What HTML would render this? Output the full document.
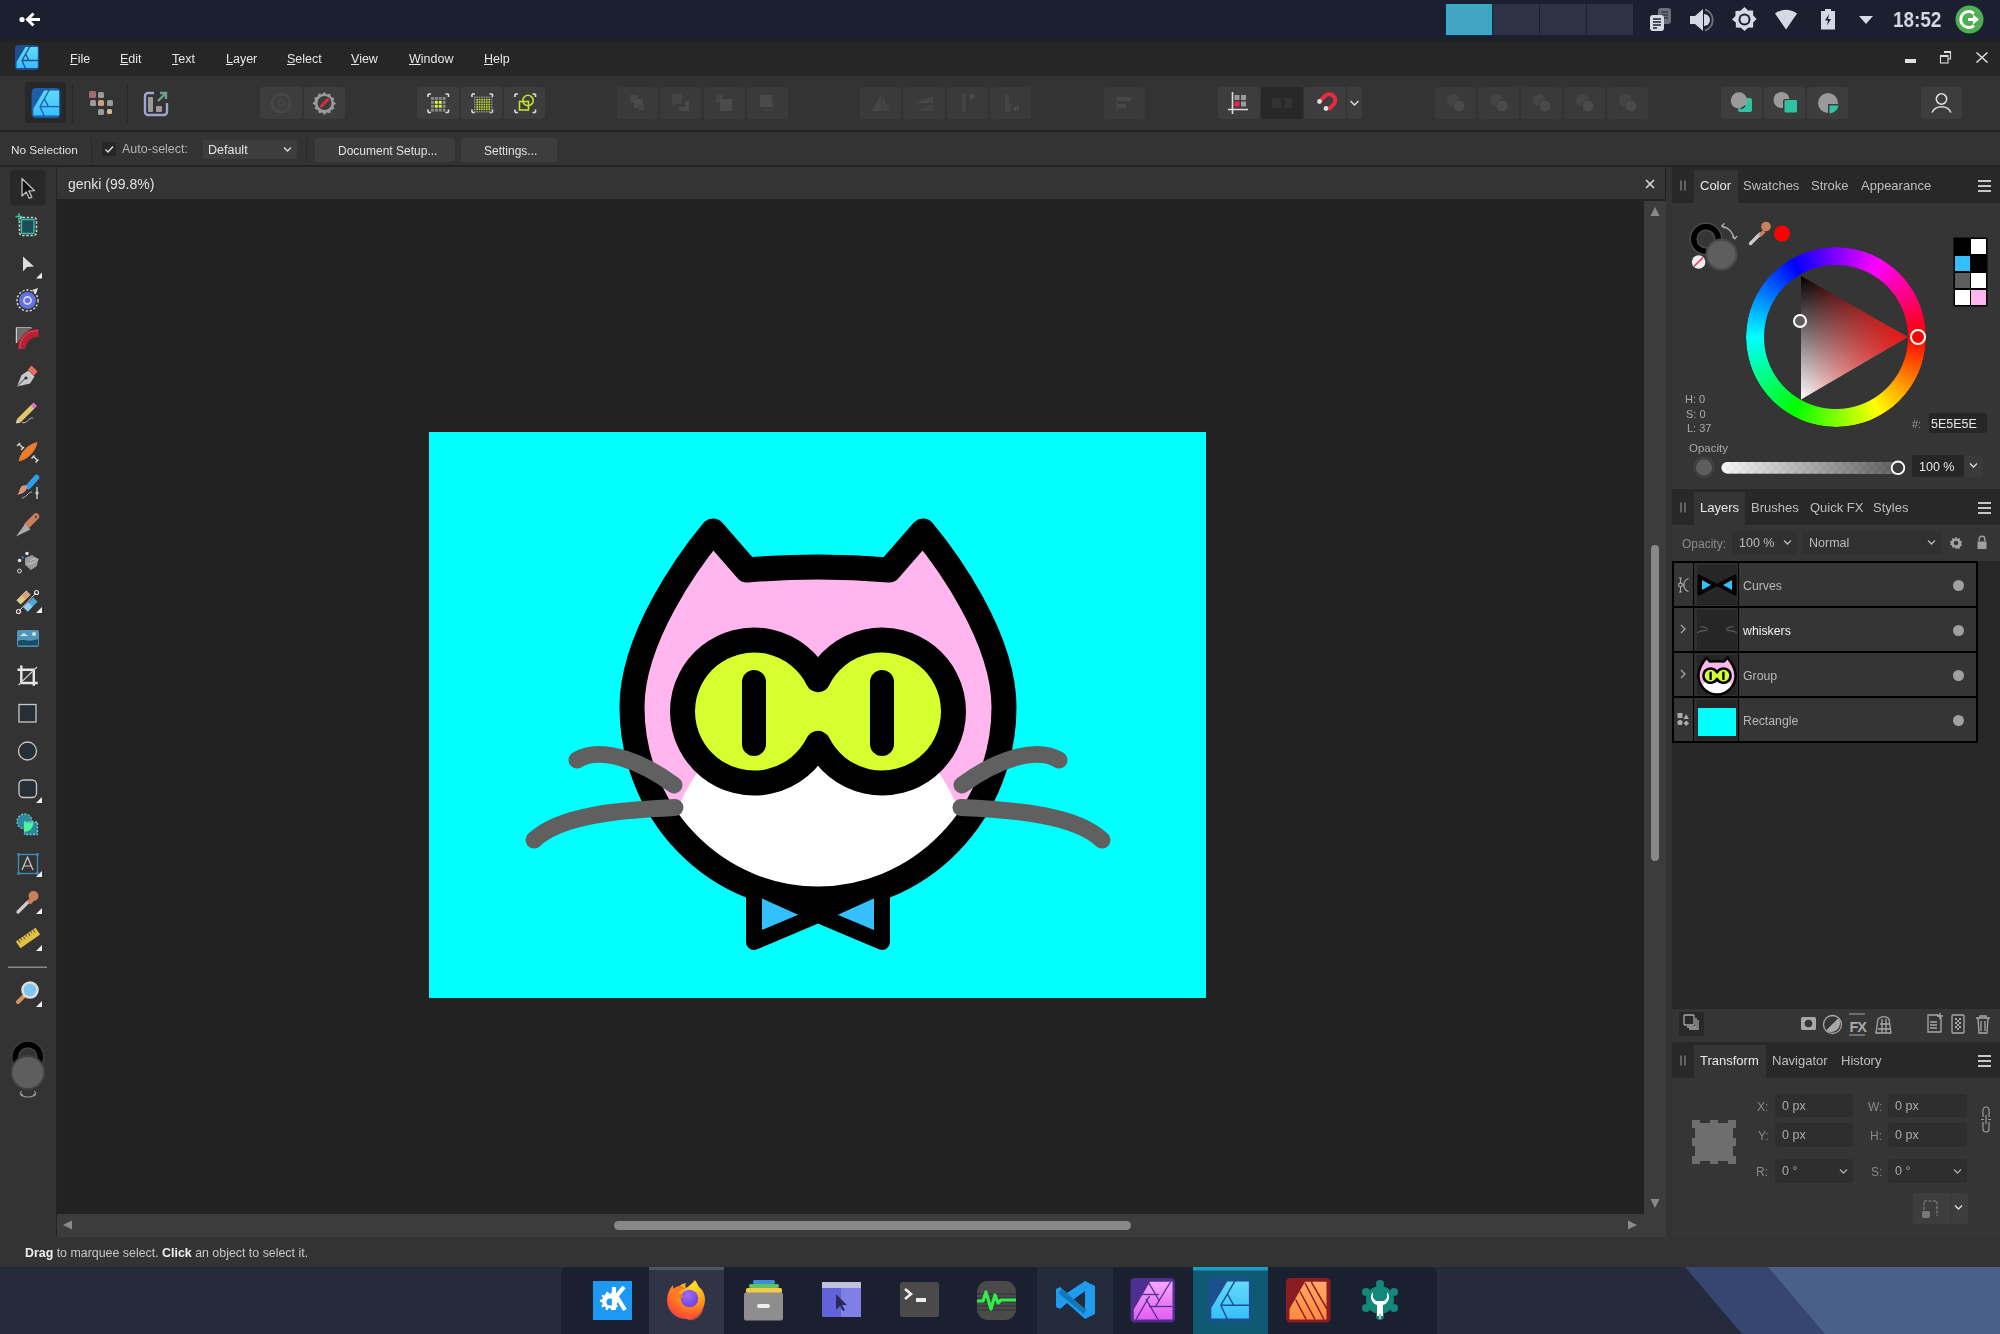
<!DOCTYPE html>
<html><head><meta charset="utf-8">
<style>
*{margin:0;padding:0;box-sizing:border-box}
html,body{width:2000px;height:1334px;overflow:hidden;background:#222;font-family:"Liberation Sans",sans-serif;color:#ddd;-webkit-font-smoothing:antialiased}
.t,.mi,.tab,.lbl,.val{will-change:transform}
.a{position:absolute}
#top{left:0;top:0;width:2000px;height:39px;background:#1b2031}
#menu{left:0;top:39px;width:2000px;height:37px;background:linear-gradient(#202020,#262626 5px)}
#tool{left:0;top:76px;width:2000px;height:54px;background:#333}
#ctx{left:0;top:131px;width:2000px;height:35px;background:#333;border-top:1px solid #222}
#sep2{left:0;top:165px;width:2000px;height:2px;background:#232323}
#ltools{left:0;top:167px;width:56px;height:1070px;background:#333}
#lsep{left:56px;top:167px;width:1px;height:1070px;background:#242424}
#doctab{left:57px;top:167px;width:1608px;height:32px;background:#353535}
#canvas{left:57px;top:200px;width:1587px;height:1014px;background:#222}
#vscroll{left:1644px;top:201px;width:22px;height:1036px;background:#3c3c3c}
#hscroll{left:57px;top:1214px;width:1609px;height:23px;background:#3c3c3c}
#rgap{left:1666px;top:167px;width:6px;height:1070px;background:#333}
#rpanel{left:1672px;top:167px;width:328px;height:1070px;background:#353535}
#status{left:0;top:1237px;width:2000px;height:30px;background:#333}
#task{left:0;top:1267px;width:2000px;height:67px;background:#252b3d;overflow:hidden}
.menuitem{font-size:13px;color:#e6e6e6;top:50px}

.t{position:absolute;white-space:nowrap;line-height:1}
.btn{position:absolute;background:#3b3b3b;border-radius:3px}
.sep{position:absolute;width:1px;background:#262626}
.mi{position:absolute;top:53px;font-size:12.5px;color:#e6e6e6;line-height:1}
.mi u{text-decoration:underline;text-underline-offset:0.5px}

.tabbar{position:absolute;left:1672px;width:328px;height:36px;background:#282828}
.grip{position:absolute;width:22px;height:36px}
.tab{position:absolute;font-size:13px;color:#c8c8c8;line-height:1;white-space:nowrap}
.tabact{position:absolute;background:#353535}
.ham{position:absolute;left:1978px;width:13px;height:12px}
.ham i{display:block;height:2px;background:#c8c8c8;margin-bottom:3px}
.lbl{position:absolute;font-size:11.5px;color:#9a9a9a;line-height:1;white-space:nowrap}
.inp{position:absolute;background:#2b2b2b;border-radius:3px}
.val{position:absolute;font-size:12.5px;color:#d0d0d0;line-height:1;white-space:nowrap}
</style></head><body>
<div id="top" class="a"></div>
<div id="menu" class="a"></div>
<div id="tool" class="a"></div>
<div id="ctx" class="a"></div>
<div id="sep2" class="a"></div>
<div id="ltools" class="a"></div>
<div id="lsep" class="a"></div>
<div id="doctab" class="a"></div>
<div id="canvas" class="a"></div>
<div id="vscroll" class="a"></div>
<div id="hscroll" class="a"></div>
<div id="rgap" class="a"></div>
<div id="rpanel" class="a"></div>
<div id="status" class="a"></div>
<div id="task" class="a"></div>

<!-- KDE top panel -->
<svg class="a" style="left:14px;top:9px" width="34" height="22" viewBox="0 0 34 22"><circle cx="8" cy="10.5" r="2.6" fill="#fff"/><path d="M26 10.5 H14 M19.5 4.5 L13.5 10.5 L19.5 16.5" stroke="#fff" stroke-width="3" fill="none" stroke-linecap="butt" stroke-linejoin="miter"/></svg>
<div class="a" style="left:1446px;top:4px;width:46px;height:31px;background:#41a5c1;border:1px solid #20b6dd"></div>
<div class="a" style="left:1493px;top:4px;width:46px;height:31px;background:#2d3244"></div>
<div class="a" style="left:1540px;top:4px;width:46px;height:31px;background:#2d3244"></div>
<div class="a" style="left:1587px;top:4px;width:46px;height:31px;background:#2d3244"></div>
<svg class="a" style="left:1648px;top:6px" width="28" height="28" viewBox="0 0 28 28">
<rect x="10" y="2" width="13" height="16" rx="3" fill="#6a6f7c"/><path d="M13 6h7M13 9h7M13 12h7" stroke="#1b2031" stroke-width="1.2"/>
<rect x="2" y="9" width="14" height="16" rx="3" fill="#d4d9e3"/><path d="M5 13h8M5 16h8M5 19h8M5 22h4" stroke="#1b2031" stroke-width="1.3"/></svg>
<svg class="a" style="left:1688px;top:7px" width="28" height="26" viewBox="0 0 28 26"><path d="M2 9h5l8-7v22l-8-7H2z" fill="#d4d9e3"/><path d="M16 7a6 6 0 0 1 0 12z" fill="#d4d9e3"/><path d="M17 2.5a11 11 0 0 1 0 21" stroke="#6a6f7c" stroke-width="2" fill="none"/></svg>
<svg class="a" style="left:1731px;top:6px" width="27" height="27" viewBox="0 0 27 27"><path d="M13.5 1l3.6 3.4 5 0 .1 5 3.4 3.6-3.4 3.6-.1 5-5 .1-3.6 3.4-3.6-3.4-5-.1-.1-5L1 13.5l3.4-3.6.1-5 5-.1z" fill="#d4d9e3"/><circle cx="13.5" cy="13.5" r="6" fill="#1b2031"/><circle cx="13.5" cy="13.5" r="4" fill="#d4d9e3"/></svg>
<svg class="a" style="left:1774px;top:9px" width="24" height="21" viewBox="0 0 24 21"><path d="M1 4.5Q12 -3 23 4.5L12 20.5z" fill="#d4d9e3"/></svg>
<svg class="a" style="left:1820px;top:8px" width="16" height="22" viewBox="0 0 16 22"><rect x="5" y="1" width="6" height="3" fill="#d4d9e3"/><rect x="1" y="3" width="14" height="18.5" fill="#d4d9e3"/><path d="M9 6L5 12.5h3l-1 5 4-6.5H8z" fill="#1b2031"/></svg>
<svg class="a" style="left:1858px;top:15px" width="16" height="10" viewBox="0 0 16 10"><path d="M1 1h14L8 9z" fill="#d4d9e3"/></svg>
<div class="t" style="left:1893px;top:9px;font-size:22.5px;font-weight:700;color:#d5dae5;transform:scaleX(0.84);transform-origin:0 0">18:52</div>
<svg class="a" style="left:1955px;top:5px" width="29" height="29" viewBox="0 0 29 29"><circle cx="14.5" cy="14.5" r="14" fill="#4caf50"/><path d="M19 8.5A8 8 0 1 0 19 20.5" stroke="#fff" stroke-width="3" fill="none"/><path d="M13 14.5h7" stroke="#fff" stroke-width="3"/><path d="M18 9.5l6 5-6 5z" fill="#fff"/></svg>
<!-- menu -->
<svg class="a" style="left:15px;top:45px" width="24" height="25" viewBox="0 0 24 25"><defs><linearGradient id="lg1" x1="0" y1="0" x2="0" y2="1"><stop offset="0" stop-color="#62daf8"/><stop offset="1" stop-color="#38c0fc"/></linearGradient></defs><rect x="0" y="0" width="24" height="25" rx="3.5" fill="#1b4f8f"/><path d="M10.5 2H22.8V23H1.5V17z" fill="url(#lg1)"/><path d="M14.8 1.5L7 15.5L10.8 24M7 15.5H23M10.5 8.8L14 15.5" stroke="#1b4f8f" stroke-width="1.3" fill="none"/></svg>
<div class="mi" style="left:70px"><u>F</u>ile</div>
<div class="mi" style="left:120px"><u>E</u>dit</div>
<div class="mi" style="left:172px"><u>T</u>ext</div>
<div class="mi" style="left:226px"><u>L</u>ayer</div>
<div class="mi" style="left:287px"><u>S</u>elect</div>
<div class="mi" style="left:351px"><u>V</u>iew</div>
<div class="mi" style="left:409px"><u>W</u>indow</div>
<div class="mi" style="left:484px"><u>H</u>elp</div>
<div class="a" style="left:1905px;top:58.5px;width:11px;height:4px;background:#e0e0e0"></div>
<svg class="a" style="left:1938px;top:50px" width="14" height="14" viewBox="0 0 14 14"><path d="M6 1.5h6.5v7.5H10" stroke="#ddd" stroke-width="1.1" fill="none"/><path d="M6 2h6.5" stroke="#ddd" stroke-width="2"/><rect x="2.5" y="5.5" width="7.5" height="7.5" fill="#262626" stroke="#ddd" stroke-width="1.1"/><path d="M2.5 6h7.5" stroke="#ddd" stroke-width="2"/></svg>
<svg class="a" style="left:1975px;top:51px" width="14" height="13" viewBox="0 0 14 13"><path d="M1.5 1.5L12.5 11.5M12.5 1.5L1.5 11.5" stroke="#ddd" stroke-width="1.6"/></svg>
<!-- toolbar -->
<div class="a" style="left:25px;top:82px;width:41px;height:41px;background:#282828;border-radius:3px"></div>
<svg class="a" style="left:31px;top:88px" width="30" height="30" viewBox="0 0 24 25"><rect x="0" y="0" width="24" height="25" rx="3.5" fill="#1b5fa8"/><path d="M10.5 2H22.8V23H1.5V17z" fill="url(#lg1)"/><path d="M14.8 1.5L7 15.5L10.8 24M7 15.5H23M10.5 8.8L14 15.5" stroke="#1b5fa8" stroke-width="1.1" fill="none"/></svg>
<div class="sep" style="left:72px;top:83px;height:40px;background:#262626"></div>
<div class="sep" style="left:127px;top:83px;height:40px;background:#262626"></div>
<svg class="a" style="left:88px;top:90px" width="26" height="26" viewBox="0 0 26 26">
<rect x="1" y="1" width="7" height="7" rx="1.5" fill="#a06a74"/><rect x="10" y="2" width="6" height="6" rx="1.5" fill="#9a9a9a"/>
<rect x="2" y="10" width="6" height="6" rx="1.5" fill="#9a9a9a"/><rect x="10" y="10" width="6" height="6" rx="1.5" fill="#c4a27e"/><rect x="19" y="10" width="6" height="6" rx="1.5" fill="#9a9a9a"/>
<rect x="10" y="19" width="6" height="6" rx="1.5" fill="#9a9a9a"/><rect x="19" y="19" width="5" height="5" rx="1.5" fill="#cbbd8c"/></svg>
<svg class="a" style="left:142px;top:89px" width="28" height="28" viewBox="0 0 28 28">
<path d="M12 4H6a3 3 0 0 0-3 3v16a3 3 0 0 0 3 3h16a3 3 0 0 0 3-3v-9" stroke="#9fa3d0" stroke-width="2.4" fill="none"/>
<rect x="6" y="8" width="5" height="15" rx="1" fill="#9a9a9a"/><rect x="14" y="17" width="6" height="6" rx="1" fill="#9a9a9a"/>
<path d="M16 12L24 4M18 4h6v6" stroke="#6aa08f" stroke-width="2.4" fill="none"/></svg>
<div class="btn" style="left:260px;top:87px;width:42px;height:32px;background:#3d3d3d"><svg width="42" height="32" viewBox="0 0 42 32"><circle cx="21" cy="16" r="9" fill="none" stroke="#474747" stroke-width="3"/><circle cx="21" cy="16" r="3" fill="none" stroke="#474747" stroke-width="2"/></svg></div>
<div class="btn" style="left:304px;top:87px;width:41px;height:32px;background:#3d3d3d"><svg width="41" height="32" viewBox="0 0 41 32"><path d="M20.5 5l2.2 2.6 3.3-.9 1 3.3 3.3 1-.9 3.3 2.6 2.2-2.6 2.2.9 3.3-3.3 1-1 3.3-3.3-.9-2.2 2.6-2.2-2.6-3.3.9-1-3.3-3.3-1 .9-3.3L8.4 16.2 11 14l-.9-3.3 3.3-1 1-3.3 3.3.9z" fill="#9a9a9a"/><circle cx="20.5" cy="16" r="7" fill="#3d3d3d"/><path d="M16.5 20l8-8" stroke="#e8293f" stroke-width="2.6"/></svg></div>
<div class="btn" style="left:417px;top:87px;width:42px;height:32px;background:#3d3d3d"><svg width="42" height="32" viewBox="0 0 42 32"><path d="M11 7v3M11 7h3M31.5 7v3M31.5 7h-3M11 25.5v-3M11 25.5h3M31.5 25.5v-3M31.5 25.5h-3" stroke="#ddd" stroke-width="1.6"/><rect x="14.0" y="10.0" width="2.9" height="2.9" fill="#8a8a8a"/><rect x="14.0" y="13.9" width="2.9" height="2.9" fill="#8a8a8a"/><rect x="14.0" y="17.8" width="2.9" height="2.9" fill="#8a8a8a"/><rect x="14.0" y="21.7" width="2.9" height="2.9" fill="#8a8a8a"/><rect x="17.9" y="10.0" width="2.9" height="2.9" fill="#8a8a8a"/><rect x="17.9" y="13.9" width="2.9" height="2.9" fill="#e3fb2a"/><rect x="17.9" y="17.8" width="2.9" height="2.9" fill="#e3fb2a"/><rect x="17.9" y="21.7" width="2.9" height="2.9" fill="#8a8a8a"/><rect x="21.8" y="10.0" width="2.9" height="2.9" fill="#8a8a8a"/><rect x="21.8" y="13.9" width="2.9" height="2.9" fill="#e3fb2a"/><rect x="21.8" y="17.8" width="2.9" height="2.9" fill="#e3fb2a"/><rect x="21.8" y="21.7" width="2.9" height="2.9" fill="#8a8a8a"/><rect x="25.7" y="10.0" width="2.9" height="2.9" fill="#8a8a8a"/><rect x="25.7" y="13.9" width="2.9" height="2.9" fill="#8a8a8a"/><rect x="25.7" y="17.8" width="2.9" height="2.9" fill="#8a8a8a"/><rect x="25.7" y="21.7" width="2.9" height="2.9" fill="#8a8a8a"/></svg></div>
<div class="btn" style="left:461px;top:87px;width:41px;height:32px;background:#3d3d3d"><svg width="42" height="32" viewBox="0 0 42 32"><path d="M11 7v3M11 7h3M31.5 7v3M31.5 7h-3M11 25.5v-3M11 25.5h3M31.5 25.5v-3M31.5 25.5h-3" stroke="#ddd" stroke-width="1.6"/><rect x="13.0" y="9.5" width="1.6" height="1.6" fill="#888"/><rect x="13.0" y="11.9" width="1.6" height="1.6" fill="#888"/><rect x="13.0" y="14.3" width="1.6" height="1.6" fill="#888"/><rect x="13.0" y="16.7" width="1.6" height="1.6" fill="#888"/><rect x="13.0" y="19.1" width="1.6" height="1.6" fill="#888"/><rect x="13.0" y="21.5" width="1.6" height="1.6" fill="#888"/><rect x="13.0" y="23.9" width="1.6" height="1.6" fill="#888"/><rect x="15.4" y="9.5" width="1.6" height="1.6" fill="#888"/><rect x="15.4" y="11.9" width="1.6" height="1.6" fill="#c8e02a"/><rect x="15.4" y="14.3" width="1.6" height="1.6" fill="#c8e02a"/><rect x="15.4" y="16.7" width="1.6" height="1.6" fill="#c8e02a"/><rect x="15.4" y="19.1" width="1.6" height="1.6" fill="#c8e02a"/><rect x="15.4" y="21.5" width="1.6" height="1.6" fill="#c8e02a"/><rect x="15.4" y="23.9" width="1.6" height="1.6" fill="#888"/><rect x="17.8" y="9.5" width="1.6" height="1.6" fill="#888"/><rect x="17.8" y="11.9" width="1.6" height="1.6" fill="#c8e02a"/><rect x="17.8" y="14.3" width="1.6" height="1.6" fill="#c8e02a"/><rect x="17.8" y="16.7" width="1.6" height="1.6" fill="#c8e02a"/><rect x="17.8" y="19.1" width="1.6" height="1.6" fill="#c8e02a"/><rect x="17.8" y="21.5" width="1.6" height="1.6" fill="#c8e02a"/><rect x="17.8" y="23.9" width="1.6" height="1.6" fill="#888"/><rect x="20.2" y="9.5" width="1.6" height="1.6" fill="#888"/><rect x="20.2" y="11.9" width="1.6" height="1.6" fill="#c8e02a"/><rect x="20.2" y="14.3" width="1.6" height="1.6" fill="#c8e02a"/><rect x="20.2" y="16.7" width="1.6" height="1.6" fill="#c8e02a"/><rect x="20.2" y="19.1" width="1.6" height="1.6" fill="#c8e02a"/><rect x="20.2" y="21.5" width="1.6" height="1.6" fill="#c8e02a"/><rect x="20.2" y="23.9" width="1.6" height="1.6" fill="#888"/><rect x="22.6" y="9.5" width="1.6" height="1.6" fill="#888"/><rect x="22.6" y="11.9" width="1.6" height="1.6" fill="#c8e02a"/><rect x="22.6" y="14.3" width="1.6" height="1.6" fill="#c8e02a"/><rect x="22.6" y="16.7" width="1.6" height="1.6" fill="#c8e02a"/><rect x="22.6" y="19.1" width="1.6" height="1.6" fill="#c8e02a"/><rect x="22.6" y="21.5" width="1.6" height="1.6" fill="#c8e02a"/><rect x="22.6" y="23.9" width="1.6" height="1.6" fill="#888"/><rect x="25.0" y="9.5" width="1.6" height="1.6" fill="#888"/><rect x="25.0" y="11.9" width="1.6" height="1.6" fill="#c8e02a"/><rect x="25.0" y="14.3" width="1.6" height="1.6" fill="#c8e02a"/><rect x="25.0" y="16.7" width="1.6" height="1.6" fill="#c8e02a"/><rect x="25.0" y="19.1" width="1.6" height="1.6" fill="#c8e02a"/><rect x="25.0" y="21.5" width="1.6" height="1.6" fill="#c8e02a"/><rect x="25.0" y="23.9" width="1.6" height="1.6" fill="#888"/><rect x="27.4" y="9.5" width="1.6" height="1.6" fill="#888"/><rect x="27.4" y="11.9" width="1.6" height="1.6" fill="#c8e02a"/><rect x="27.4" y="14.3" width="1.6" height="1.6" fill="#c8e02a"/><rect x="27.4" y="16.7" width="1.6" height="1.6" fill="#c8e02a"/><rect x="27.4" y="19.1" width="1.6" height="1.6" fill="#c8e02a"/><rect x="27.4" y="21.5" width="1.6" height="1.6" fill="#c8e02a"/><rect x="27.4" y="23.9" width="1.6" height="1.6" fill="#888"/><rect x="29.8" y="9.5" width="1.6" height="1.6" fill="#888"/><rect x="29.8" y="11.9" width="1.6" height="1.6" fill="#888"/><rect x="29.8" y="14.3" width="1.6" height="1.6" fill="#888"/><rect x="29.8" y="16.7" width="1.6" height="1.6" fill="#888"/><rect x="29.8" y="19.1" width="1.6" height="1.6" fill="#888"/><rect x="29.8" y="21.5" width="1.6" height="1.6" fill="#888"/><rect x="29.8" y="23.9" width="1.6" height="1.6" fill="#888"/></svg></div>
<div class="btn" style="left:504px;top:87px;width:41px;height:32px;background:#3d3d3d"><svg width="42" height="32" viewBox="0 0 42 32"><path d="M11 7v3M11 7h3M31.5 7v3M31.5 7h-3M11 25.5v-3M11 25.5h3M31.5 25.5v-3M31.5 25.5h-3" stroke="#ddd" stroke-width="1.6"/><rect x="15.5" y="14.5" width="9" height="8.5" fill="none" stroke="#c8e02a" stroke-width="1.6"/><circle cx="24" cy="13.5" r="5.2" fill="none" stroke="#c8e02a" stroke-width="1.6"/></svg></div>
<div class="btn" style="left:617px;top:87px;width:41px;height:32px;background:#3a3a3a"><svg width="42" height="32" viewBox="0 0 42 32"><rect x="13" y="8" width="8" height="8" fill="#464646"/><rect x="17" y="12" width="9" height="9" fill="#4a4a4a"/><rect x="21" y="18" width="6" height="5" fill="#444"/></svg></div>
<div class="btn" style="left:660px;top:87px;width:41px;height:32px;background:#3a3a3a"><svg width="42" height="32" viewBox="0 0 42 32"><rect x="12" y="7" width="10" height="10" fill="#444"/><path d="M19 20h6v-6h4v10H19z" fill="#4a4a4a"/></svg></div>
<div class="btn" style="left:704px;top:87px;width:41px;height:32px;background:#3a3a3a"><svg width="42" height="32" viewBox="0 0 42 32"><rect x="12" y="7" width="7" height="9" fill="#444"/><rect x="16" y="12" width="12" height="12" fill="#4a4a4a"/></svg></div>
<div class="btn" style="left:747px;top:87px;width:41px;height:32px;background:#3a3a3a"><svg width="42" height="32" viewBox="0 0 42 32"><rect x="13" y="8" width="12" height="12" fill="#4a4a4a"/><path d="M26 15v8h-8" stroke="#444" stroke-width="1.5" fill="none"/></svg></div>
<div class="btn" style="left:860px;top:87px;width:41px;height:32px;background:#3a3a3a"><svg width="42" height="32" viewBox="0 0 42 32"><path d="M21 7v17h-9z" fill="#464646"/><path d="M22 7v17h8z" fill="#424242"/></svg></div>
<div class="btn" style="left:903px;top:87px;width:42px;height:32px;background:#3a3a3a"><svg width="42" height="32" viewBox="0 0 42 32"><path d="M30 9v7H13z" fill="#464646"/><path d="M30 17v7H13z" fill="#424242"/></svg></div>
<div class="btn" style="left:947px;top:87px;width:41px;height:32px;background:#3a3a3a"><svg width="42" height="32" viewBox="0 0 42 32"><rect x="15" y="7" width="6" height="18" fill="#444"/><path d="M20 8v17" stroke="#2c2c2c" stroke-width="1"/><path d="M24 13v-4h4M26 7l-2 2 2 2" stroke="#4e4e4e" stroke-width="1.3" fill="none"/></svg></div>
<div class="btn" style="left:990px;top:87px;width:41px;height:32px;background:#3a3a3a"><svg width="42" height="32" viewBox="0 0 42 32"><rect x="15" y="7" width="6" height="18" fill="#444"/><path d="M20 7v9" stroke="#2c2c2c" stroke-width="1"/><path d="M28 18v4h-4M26 24l-2-2 2-2" stroke="#4e4e4e" stroke-width="1.3" fill="none"/></svg></div>
<div class="btn" style="left:1104px;top:87px;width:41px;height:32px;background:#3a3a3a"><svg width="42" height="32" viewBox="0 0 42 32"><rect x="13" y="10" width="14" height="4" fill="#484848"/><rect x="13" y="17" width="9" height="4" fill="#484848"/><path d="M13 8v16" stroke="#444" stroke-width="1.3"/></svg></div>
<div class="btn" style="left:1218px;top:87px;width:42px;height:32px;background:#3d3d3d"><svg width="42" height="32" viewBox="0 0 42 32"><path d="M14.5 5v22M10 22.5h20" stroke="#ddd" stroke-width="1.6"/><rect x="16.5" y="8" width="5" height="5" fill="#9a9a9a"/><rect x="23" y="8" width="5" height="5" fill="#9a9a9a"/><rect x="16.5" y="14.5" width="5" height="5" fill="#e8293f"/><rect x="23" y="14.5" width="5" height="5" fill="#9a9a9a"/></svg></div>
<div class="btn" style="left:1261px;top:87px;width:42px;height:32px;background:#282828"><svg width="42" height="32" viewBox="0 0 42 32"><rect x="11" y="11" width="9" height="10" fill="#333"/><path d="M22 11h9v10h-9l3-5z" fill="#333"/></svg></div>
<div class="btn" style="left:1304px;top:87px;width:42px;height:32px;background:#3d3d3d"><svg width="42" height="32" viewBox="0 0 42 32"><path d="M16 14l5-5a6 6 0 0 1 8.5 8.5l-5 5" stroke="#e8293f" stroke-width="4" fill="none"/><circle cx="15.5" cy="14.5" r="2.4" fill="#ddd"/><circle cx="22" cy="21.5" r="2.4" fill="#ddd"/></svg></div>
<div class="btn" style="left:1347px;top:87px;width:15px;height:32px;background:#3d3d3d"><svg width="15" height="32" viewBox="0 0 15 32"><path d="M3.5 14l4 4 4-4" stroke="#ddd" stroke-width="1.4" fill="none"/></svg></div>
<div class="btn" style="left:1435px;top:87px;width:41px;height:32px;background:#3a3a3a"><svg width="42" height="32" viewBox="0 0 42 32"><circle cx="18.5" cy="13.5" r="6.5" fill="#454545"/><circle cx="24" cy="19" r="6" fill="#4a4a4a" stroke="#3a3a3a" stroke-width="1"/></svg></div>
<div class="btn" style="left:1478px;top:87px;width:41px;height:32px;background:#3a3a3a"><svg width="42" height="32" viewBox="0 0 42 32"><circle cx="18.5" cy="13.5" r="6.5" fill="#454545"/><circle cx="24" cy="19" r="6" fill="#4a4a4a" stroke="#3a3a3a" stroke-width="1"/></svg></div>
<div class="btn" style="left:1521px;top:87px;width:41px;height:32px;background:#3a3a3a"><svg width="42" height="32" viewBox="0 0 42 32"><circle cx="18.5" cy="13.5" r="6.5" fill="#454545"/><circle cx="24" cy="19" r="6" fill="#4a4a4a" stroke="#3a3a3a" stroke-width="1"/></svg></div>
<div class="btn" style="left:1564px;top:87px;width:41px;height:32px;background:#3a3a3a"><svg width="42" height="32" viewBox="0 0 42 32"><circle cx="18.5" cy="13.5" r="6.5" fill="#454545"/><circle cx="24" cy="19" r="6" fill="#4a4a4a" stroke="#3a3a3a" stroke-width="1"/></svg></div>
<div class="btn" style="left:1607px;top:87px;width:41px;height:32px;background:#3a3a3a"><svg width="42" height="32" viewBox="0 0 42 32"><circle cx="18.5" cy="13.5" r="6.5" fill="#454545"/><circle cx="24" cy="19" r="6" fill="#4a4a4a" stroke="#3a3a3a" stroke-width="1"/></svg></div>
<div class="btn" style="left:1721px;top:87px;width:41px;height:32px;background:#3d3d3d"><svg width="41" height="32" viewBox="0 0 41 32"><path d="M24 11h5a2 2 0 0 1 2 2v10a2 2 0 0 1-2 2H19a2 2 0 0 1-2-2" fill="#2ec4a0"/><circle cx="18" cy="13.5" r="8.2" fill="#9a9a9a"/><path d="M25 18a8 8 0 0 1-6.5 4" stroke="#3d3d3d" stroke-width="0"/></svg></div>
<div class="btn" style="left:1764px;top:87px;width:41px;height:32px;background:#3d3d3d"><svg width="41" height="32" viewBox="0 0 41 32"><circle cx="17.5" cy="13" r="8" fill="#9a9a9a"/><rect x="19" y="12" width="13.5" height="13.5" rx="2" fill="#3d3d3d"/><rect x="20.5" y="13" width="12.5" height="12.5" rx="1.5" fill="#2ec4a0"/></svg></div>
<div class="btn" style="left:1807px;top:87px;width:41px;height:32px;background:#3d3d3d"><svg width="41" height="32" viewBox="0 0 41 32"><circle cx="21" cy="16" r="10" fill="#9a9a9a"/><path d="M21 17h11a11 11 0 0 1 -11 10z" fill="#3d3d3d"/><path d="M22.5 18.5h9a9.5 9.5 0 0 1-9 8z" fill="#2ec4a0"/></svg></div>
<div class="btn" style="left:1921px;top:87px;width:41px;height:32px;background:#3d3d3d"><svg width="41" height="32" viewBox="0 0 41 32"><circle cx="20.5" cy="12" r="5.2" fill="none" stroke="#ddd" stroke-width="1.6"/><path d="M11 25.5a10.5 10 0 0 1 19 0" fill="none" stroke="#ddd" stroke-width="1.6"/></svg></div>
<!-- left tools -->
<svg class="a" style="left:0;top:0" width="56" height="1110" viewBox="0 0 56 1110"><rect x="10" y="170" width="35.5" height="35.5" rx="4" fill="#282828"/><path d="M22 178.5v17.5l4.2-4 3 6.3 2.6-1.2-3-6.2 5.8-.2z" fill="#111" stroke="#bdbdbd" stroke-width="1.3" stroke-linejoin="round"/><rect x="19.5" y="217.5" width="17" height="18" rx="3" fill="none" stroke="#ccc" stroke-width="1.6" stroke-dasharray="2.5 1.6"/><rect x="21.5" y="219.5" width="12.5" height="14" rx="1" fill="#1f4a5a" stroke="#2ec4a0" stroke-width="1.4"/><path d="M19 213v7M15.5 216.5h7" stroke="#2ec4a0" stroke-width="1.5"/><path d="M23 256.5v15l4-4.5 7-.5z" fill="#ddd"/><path d="M36 278.5h6v-6z" fill="#eee"/><circle cx="27.5" cy="300.5" r="10.5" fill="none" stroke="#ddd" stroke-width="1.4" stroke-dasharray="2.2 1.8"/><circle cx="27.5" cy="300.5" r="8.5" fill="#6471e0"/><circle cx="27.5" cy="300.5" r="3.6" fill="none" stroke="#ddd" stroke-width="1.6"/><path d="M32 290l6-2-2 6z" fill="#ddd"/><path d="M16.5 343v-15h15" stroke="#ccc" stroke-width="1.4" fill="none"/><path d="M17 343v-15h14z" fill="#6a6a6a"/><path d="M18 349A19 19 0 0 1 38.5 329v8A12 12 0 0 0 25.5 349z" fill="#b52035"/><path d="M20 348.5A16.5 16.5 0 0 1 38 331" stroke="#ef5560" stroke-width="0.8" fill="none"/><path d="M31.5 365.5l6 6-3.5 4-6-6z" fill="#f26a5b"/><path d="M17 386.5l4.5-11.5 7-4.5 6 6-4.5 7z" fill="#c8c8c8"/><path d="M17 386.5l6-2.5 6-6" stroke="#7a7a7a" stroke-width="0" fill="none"/><path d="M17.5 386l8-8" stroke="#3a3a3a" stroke-width="1"/><circle cx="26" cy="378" r="1.6" fill="#333"/><path d="M33.5 402.5l3.5 3.5-2.5 2.5-3.5-3.5z" fill="#e571d8"/><path d="M31 405l3.5 3.5-14 14-3.5-3.5z" fill="#e3c56b"/><path d="M17 419l3.5 3.5-4.5 1z" fill="#f1e0a8"/><path d="M22 422.5c3 1 5-1 7-3s4-2 4-1" stroke="#bbb" stroke-width="1" fill="none"/><path d="M18.5 461.5C20 452 28 444 37.5 442C36 451.5 28 459.5 18.5 461.5Z" fill="#eb7d2e"/><g stroke="#ddd" stroke-width="1.3"><path d="M18.5 443.5l4 4M17 446l3-3M21 450l3-3"/><path d="M33 456l4 4M31.5 458.5l3-3M35.5 462.5l3-3"/></g><path d="M28.5 486.5L36.5 477.5" stroke="#2e9ee6" stroke-width="5.5" stroke-linecap="round"/><path d="M18 494.5c2 0 5-1 7-3s3-5 1-6-5 0-6 3-1 5-3 6z" fill="#d69478"/><path d="M22 498c4 0 6-6 10-6" stroke="#bbb" stroke-width="1" fill="none"/><path d="M37 487v12" stroke="#ccc" stroke-width="1.4"/><circle cx="37" cy="493" r="1.7" fill="#ccc"/><path d="M27.5 525L36 516.5" stroke="#c87f5c" stroke-width="6.5" stroke-linecap="round"/><circle cx="35.8" cy="516.8" r="1.1" fill="#333"/><path d="M16 536.5l9-12.5 5.5 5.5z" fill="#aaa"/><path d="M25 558l7-3 6 4-1 7-6 4-6-5z" fill="#9a9a9a"/><path d="M30 561c4-3 9-3 8-1s-8 4-11 4" stroke="#ccc" stroke-width="1" fill="none"/><path d="M20 561l4-5" stroke="#2e9ee6" stroke-width="1.6" stroke-dasharray="2 1.5"/><circle cx="19.5" cy="560.5" r="1.8" fill="#ddd"/><circle cx="27" cy="553.5" r="1.8" fill="#ddd"/><circle cx="19.5" cy="571" r="1.9" fill="none" stroke="#ddd" stroke-width="1"/><g transform="rotate(-45 27 601)"><rect x="20" y="593" width="14" height="6" fill="#e0c88a"/><rect x="20" y="603" width="14" height="6" fill="#4fa8d8"/><rect x="27" y="593" width="7" height="6" fill="#d9a07a"/><rect x="20" y="603" width="7" height="6" fill="#8fd0f0"/></g><path d="M19 611l17-18" stroke="#ddd" stroke-width="1"/><circle cx="18.5" cy="611.5" r="2" fill="none" stroke="#ddd" stroke-width="1.2"/><circle cx="36.5" cy="592.5" r="2" fill="none" stroke="#ddd" stroke-width="1.2"/><path d="M36 613h6v-6z" fill="#eee"/><rect x="17" y="630" width="22" height="17" rx="2" fill="#4f96b8"/><path d="M18 641c5-3 10 2 20-2v6.5H18z" fill="#1d4b60"/><path d="M20 636l4-3 4 3z" fill="#ddd"/><circle cx="34" cy="634" r="2" fill="#ddd"/><path d="M21.3 665.5v17.5h16.5M17.5 669.8h16.3v16" stroke="#e6e6e6" stroke-width="2.4" fill="none"/><path d="M18.5 685L37 667" stroke="#ccc" stroke-width="1.1"/><rect x="19" y="704.5" width="17" height="17.5" fill="#263034" stroke="#c8c8c8" stroke-width="1.3"/><circle cx="27.5" cy="751" r="9" fill="#263034" stroke="#c8c8c8" stroke-width="1.3"/><rect x="19" y="780" width="17.5" height="17.5" rx="4.5" fill="#263034" stroke="#c8c8c8" stroke-width="1.3"/><path d="M36 803h6v-6z" fill="#eee"/><circle cx="24.5" cy="821.5" r="7.5" fill="#2a8a9a" stroke="#6bc8e0" stroke-width="1.3" stroke-dasharray="2 1.5"/><rect x="24.5" y="822" width="13" height="12.5" fill="#2a8a9a" stroke="#6bc8e0" stroke-width="1.3" stroke-dasharray="2 1.5"/><path d="M24 822.5h9.5a9.5 9.5 0 0 1-9.5 9.5z" fill="#4ef59a"/><rect x="18.5" y="854.5" width="19" height="19" fill="none" stroke="#3a8fc4" stroke-width="1.3"/><circle cx="18.5" cy="854.5" r="1.4" fill="#3a8fc4"/><circle cx="37.5" cy="854.5" r="1.4" fill="#3a8fc4"/><circle cx="18.5" cy="873.5" r="1.4" fill="#3a8fc4"/><circle cx="37.5" cy="873.5" r="1.4" fill="#3a8fc4"/><path d="M22 870l5.5-13 5.5 13M24 866h7" stroke="#ccc" stroke-width="1.2" fill="none"/><path d="M36 877h6v-6z" fill="#eee"/><path d="M18 912l10-10" stroke="#ccc" stroke-width="3.2" stroke-linecap="round"/><circle cx="33.5" cy="896" r="5" fill="#c9805d"/><path d="M27 901l3.5 3.5 4-4-3.5-3.5z" fill="#c9805d"/><path d="M36 914h6v-6z" fill="#eee"/><g transform="rotate(-35 28 938)"><rect x="16" y="934" width="24" height="8" fill="#e3c040"/><path d="M19 934v3.5M22 934v2.5M25 934v3.5M28 934v2.5M31 934v3.5M34 934v2.5M37 934v3.5" stroke="#555" stroke-width="1"/></g><path d="M36 951h6v-6z" fill="#eee"/><rect x="8" y="966.5" width="39" height="1.5" fill="#888"/><path d="M18 1002l5.5-5.5" stroke="#d2945e" stroke-width="4" stroke-linecap="round"/><circle cx="30" cy="990" r="8.8" fill="#ddd"/><circle cx="30" cy="990" r="6.2" fill="#7cc6f0"/><path d="M36 1007h6v-6z" fill="#eee"/><circle cx="27.8" cy="1057" r="16" fill="#000" stroke="#3f3f3f" stroke-width="1.5"/><circle cx="27.8" cy="1057" r="9" fill="#333" stroke="#444" stroke-width="1.5"/><circle cx="27.8" cy="1072.5" r="16.5" fill="#5e5e5e" stroke="#404040" stroke-width="1.8"/><path d="M20 1094c4 4 12 4 16 0M20 1094l1.5-3M20 1094l3 .8M36 1094l-1.5-3M36 1094l-3 .8" stroke="#999" stroke-width="1.1" fill="none"/></svg>
<!-- right panel -->
<div class="tabbar" style="top:167px"></div>
<svg class="a" style="left:1679px;top:180px" width="8" height="11" viewBox="0 0 8 11"><path d="M2 0.5v10M6 0.5v10" stroke="#8a8a8a" stroke-width="1.2"/></svg>
<div class="tabact" style="left:1694px;top:170px;width:44px;height:33px"></div>
<div class="tab" style="left:1700px;top:178.5px;color:#e8e8e8">Color</div>
<div class="tab" style="left:1743px;top:178.5px;color:#bdbdbd">Swatches</div>
<div class="tab" style="left:1811px;top:178.5px;color:#bdbdbd">Stroke</div>
<div class="tab" style="left:1861px;top:178.5px;color:#bdbdbd">Appearance</div>
<div class="ham" style="top:180px"><i></i><i></i><i></i></div>
<div class="a" style="left:1746px;top:247px;width:180px;height:180px;border-radius:50%;background:conic-gradient(from 90deg,#f00,#ff0,#0f0,#0ff,#00f,#f0f,#f00);-webkit-mask:radial-gradient(circle,transparent 0 71.5px,#000 72.5px 89.5px,transparent 90.5px);mask:radial-gradient(circle,transparent 0 71.5px,#000 72.5px 89.5px,transparent 90.5px)"></div>
<svg class="a" style="left:1672px;top:203px" width="328" height="286" viewBox="1672 203 328 286">
<defs>
<linearGradient id="trk" x1="0" y1="0" x2="0" y2="1"><stop offset="0" stop-color="#000"/><stop offset="1" stop-color="#fff"/></linearGradient>
<linearGradient id="trr" x1="0" y1="0" x2="1" y2="0"><stop offset="0" stop-color="#f00" stop-opacity="0"/><stop offset="1" stop-color="#f00" stop-opacity="1"/></linearGradient>
<pattern id="chk" width="8" height="8" patternUnits="userSpaceOnUse" x="1722" y="462"><rect width="8" height="8" fill="#d8d8d8"/><rect width="4" height="4" fill="#b8b8b8"/><rect x="4" y="4" width="4" height="4" fill="#b8b8b8"/></pattern>
<linearGradient id="opg" x1="0" y1="0" x2="1" y2="0"><stop offset="0" stop-color="#fff" stop-opacity="1"/><stop offset="1" stop-color="#404040" stop-opacity="1"/></linearGradient>
</defs>
<circle cx="1706" cy="239" r="15.8" fill="none" stroke="#4a4a4a" stroke-width="1.6"/>
<circle cx="1706" cy="239" r="12.2" fill="none" stroke="#000" stroke-width="5.6"/>
<circle cx="1706" cy="239" r="8.8" fill="none" stroke="#4a4a4a" stroke-width="1.4"/>
<circle cx="1721.4" cy="254.6" r="15" fill="#5e5e5e" stroke="#4a4a4a" stroke-width="2.2"/>
<path d="M1722.5 226.5Q1731 228 1734.5 238.5" stroke="#aaa" stroke-width="1.3" fill="none"/><path d="M1721.5 226.2l3-3M1721.5 226.2l3.6 1.6M1734.8 239l-2.6-3M1734.8 239l2.4-3.2" stroke="#aaa" stroke-width="1.3" fill="none"/>
<circle cx="1698.6" cy="262" r="6.8" fill="#eee"/><path d="M1694 266.5l9-9" stroke="#e53950" stroke-width="1.6"/>
<path d="M1750.5 243.5l9.5-9.5" stroke="#ccc" stroke-width="3.4" stroke-linecap="round"/><circle cx="1766" cy="226.5" r="4.8" fill="#c9805d"/><path d="M1758.5 234.5l2.5 2.5 4.5-4.5-2.5-2.5z" fill="#c9805d"/>
<circle cx="1782" cy="233.5" r="9" fill="#f00" stroke="#2f3838" stroke-width="2"/>
<rect x="1953.5" y="237.5" width="34" height="69" fill="#000"/>
<rect x="1971" y="239" width="15" height="15" fill="#fff"/>
<rect x="1955" y="256" width="15" height="15" fill="#33bfff"/>
<rect x="1955" y="273" width="15" height="15" fill="#5e5e5e"/><rect x="1971" y="273" width="15" height="15" fill="#fff"/>
<rect x="1955" y="290" width="15" height="15" fill="#fff"/><rect x="1971" y="290" width="15" height="15" fill="#ffb6ee"/>

<path d="M1801 276L1907.5 337L1801 399.5Z" fill="url(#trk)"/>
<path d="M1801 276L1907.5 337L1801 399.5Z" fill="url(#trr)" style="mix-blend-mode:normal" opacity="0.85"/>
<circle cx="1800" cy="321" r="6" fill="#5e5e5e" stroke="#fff" stroke-width="2"/>
<circle cx="1918" cy="337" r="7" fill="#f00" stroke="#fff" stroke-width="2"/>
<rect x="1721.5" y="462" width="178" height="11.5" rx="5.75" fill="url(#chk)"/>
<rect x="1721.5" y="462" width="178" height="11.5" rx="5.75" fill="url(#opg)" opacity="0.8"/>
<circle cx="1898" cy="467.8" r="6.3" fill="#3a3a3a" stroke="#fff" stroke-width="1.8"/>
<circle cx="1704" cy="467.5" r="9.8" fill="none" stroke="#4a4a4a" stroke-width="1.2"/><circle cx="1704" cy="467.5" r="8.2" fill="#5e5e5e"/>
</svg>
<div class="lbl" style="left:1685px;top:394px;font-size:11px;color:#aaa">H: 0</div>
<div class="lbl" style="left:1686px;top:408.5px;font-size:11px;color:#aaa">S: 0</div>
<div class="lbl" style="left:1687px;top:423px;font-size:11px;color:#aaa">L: 37</div>
<div class="lbl" style="left:1689px;top:442.5px;font-size:11.5px;color:#aaa">Opacity</div>
<div class="lbl" style="left:1912px;top:419px;font-size:11px;color:#999">#:</div>
<div class="inp" style="left:1929px;top:413px;width:58px;height:20px;background:#262626"></div>
<div class="val" style="left:1931px;top:418px;font-size:12.5px;color:#e6e6e6">5E5E5E</div>
<div class="inp" style="left:1912px;top:455px;width:52px;height:21.5px;background:#262626"></div>
<div class="val" style="left:1919px;top:461px;font-size:12.5px;color:#e6e6e6">100 %</div>
<div class="inp" style="left:1964px;top:456px;width:19px;height:21px;background:#3a3a3a"></div>
<svg class="a" style="left:1968px;top:461px" width="11" height="9" viewBox="0 0 11 9"><path d="M2 2.5l3.5 3.5 3.5-3.5" stroke="#ddd" stroke-width="1.3" fill="none"/></svg>
<!-- layers panel -->
<div class="tabbar" style="top:489px"></div>
<svg class="a" style="left:1679px;top:502px" width="8" height="11" viewBox="0 0 8 11"><path d="M2 0.5v10M6 0.5v10" stroke="#8a8a8a" stroke-width="1.2"/></svg>
<div class="tabact" style="left:1694px;top:492px;width:51px;height:33px"></div>
<div class="tab" style="left:1700px;top:501px;color:#e8e8e8">Layers</div>
<div class="tab" style="left:1751px;top:501px;color:#bdbdbd">Brushes</div>
<div class="tab" style="left:1810px;top:501px;color:#bdbdbd">Quick FX</div>
<div class="tab" style="left:1873px;top:501px;color:#bdbdbd">Styles</div>
<div class="ham" style="top:502px"><i></i><i></i><i></i></div>
<div class="lbl" style="left:1682px;top:538px;font-size:12px;color:#8a8a8a">Opacity:</div>
<div class="inp" style="left:1732px;top:531px;width:65px;height:23px;background:#303030"></div>
<div class="val" style="left:1739px;top:537px;font-size:12.5px;color:#bbb">100 %</div>
<svg class="a" style="left:1782px;top:538px" width="11" height="9" viewBox="0 0 11 9"><path d="M2 2.5l3.5 3.5 3.5-3.5" stroke="#bbb" stroke-width="1.3" fill="none"/></svg>
<div class="inp" style="left:1802px;top:531px;width:140px;height:23px;background:#303030"></div>
<div class="val" style="left:1809px;top:537px;font-size:12.5px;color:#bbb">Normal</div>
<svg class="a" style="left:1926px;top:538px" width="11" height="9" viewBox="0 0 11 9"><path d="M2 2.5l3.5 3.5 3.5-3.5" stroke="#bbb" stroke-width="1.3" fill="none"/></svg>
<svg class="a" style="left:1949px;top:536px" width="14" height="14" viewBox="0 0 14 14"><path d="M7 0.8l1.3 2 2.3-.7.4 2.4 2.2.9-1.1 2.1 1.1 2.1-2.2.9-.4 2.4-2.3-.7L7 13.2l-1.3-2-2.3.7-.4-2.4-2.2-.9L1.9 7.5.8 5.4 3 4.5l.4-2.4 2.3.7z" fill="#a0a0a0"/><circle cx="7" cy="7" r="2.2" fill="#333"/></svg>
<svg class="a" style="left:1977px;top:535px" width="10" height="15" viewBox="0 0 10 15"><path d="M2.2 6V4a2.8 2.8 0 0 1 5.6 0v2" stroke="#a0a0a0" stroke-width="1.4" fill="none"/><rect x="0.5" y="6.5" width="9" height="7.5" fill="#a0a0a0"/></svg>
<div class="a" style="left:1672px;top:561px;width:328px;height:448px;background:#272727"></div>
<div class="a" style="left:1672px;top:561px;width:306px;height:182px;background:#000"></div>
<div class="a" style="left:1674px;top:563px;width:19px;height:43px;background:#353535"></div>
<div class="a" style="left:1694px;top:563px;width:44px;height:43px;background:#2f2f2f"></div>
<div class="a" style="left:1697px;top:565px;width:40px;height:40px;background:#262626"></div>
<div class="a" style="left:1739px;top:563px;width:237px;height:43px;background:#353535"></div>
<div class="val" style="left:1743px;top:580px;font-size:12.3px;color:#b8b8b8;font-weight:400">Curves</div>
<div class="a" style="left:1952.5px;top:579.5px;width:11px;height:11px;border-radius:50%;background:#a0a0a0"></div>
<div class="a" style="left:1674px;top:608px;width:19px;height:43px;background:#353535"></div>
<div class="a" style="left:1694px;top:608px;width:44px;height:43px;background:#2f2f2f"></div>
<div class="a" style="left:1697px;top:610px;width:40px;height:40px;background:#262626"></div>
<div class="a" style="left:1739px;top:608px;width:237px;height:43px;background:#353535"></div>
<div class="val" style="left:1743px;top:625px;font-size:12.3px;color:#f2f2f2;font-weight:400">whiskers</div>
<div class="a" style="left:1952.5px;top:624.5px;width:11px;height:11px;border-radius:50%;background:#a0a0a0"></div>
<div class="a" style="left:1674px;top:653px;width:19px;height:43px;background:#353535"></div>
<div class="a" style="left:1694px;top:653px;width:44px;height:43px;background:#2f2f2f"></div>
<div class="a" style="left:1697px;top:655px;width:40px;height:40px;background:#262626"></div>
<div class="a" style="left:1739px;top:653px;width:237px;height:43px;background:#353535"></div>
<div class="val" style="left:1743px;top:670px;font-size:12.3px;color:#b8b8b8;font-weight:400">Group</div>
<div class="a" style="left:1952.5px;top:669.5px;width:11px;height:11px;border-radius:50%;background:#a0a0a0"></div>
<div class="a" style="left:1674px;top:698px;width:19px;height:43px;background:#353535"></div>
<div class="a" style="left:1694px;top:698px;width:44px;height:43px;background:#2f2f2f"></div>
<div class="a" style="left:1697px;top:700px;width:40px;height:40px;background:#262626"></div>
<div class="a" style="left:1739px;top:698px;width:237px;height:43px;background:#353535"></div>
<div class="val" style="left:1743px;top:715px;font-size:12.3px;color:#b8b8b8;font-weight:400">Rectangle</div>
<div class="a" style="left:1952.5px;top:714.5px;width:11px;height:11px;border-radius:50%;background:#a0a0a0"></div>
<svg class="a" style="left:1672px;top:562px" width="70" height="182" viewBox="1672 562 70 182">
<path d="M1680.5 577.5v15M1679 578h3M1679 592h3" stroke="#aaa" stroke-width="1.1" fill="none"/><circle cx="1680.5" cy="585" r="1.9" fill="#353535" stroke="#aaa" stroke-width="1.1"/><path d="M1688.5 578.5a7.5 7 0 0 0 0 13" stroke="#aaa" stroke-width="1.2" fill="none"/><path d="M1682.5 585h2" stroke="#aaa" stroke-width="1"/>
<path d="M1681 625l4 4-4 4" stroke="#aaa" stroke-width="1.2" fill="none"/>
<path d="M1681 670l4 4-4 4" stroke="#aaa" stroke-width="1.2" fill="none"/>
<rect x="1677.5" y="713" width="5" height="5" fill="#aaa"/><path d="M1683.5 719l2.7-5 2.7 5z" fill="#aaa"/><circle cx="1680" cy="722.5" r="2.6" fill="#aaa"/><path d="M1686.3 720.5l2.8 2.8-2.8 2.8-2.8-2.8z" fill="#aaa"/>
<path d="M1699 576l17 9-17 9z M1735 576l-17 9 17 9z" fill="#000" stroke="#000" stroke-width="3" stroke-linejoin="round"/>
<path d="M1702 580l9 5-9 5z M1732 580l-9 5 9 5z" fill="#33bfff"/>
<g transform="translate(1717 629.5) scale(0.068) translate(-818 -795)" stroke="#5a5a5a" stroke-width="17" stroke-linecap="round" fill="none"><path d="M577 760 C600 746 640 760 674 785"/><path d="M534 840 C560 815 620 810 675 807.5"/><path d="M1059 760 C1036 746 996 760 962 785"/><path d="M1102 840 C1076 815 1016 810 961 807.5"/></g>
<rect x="1698" y="708" width="38" height="28" fill="#00ffff"/>
<g transform="translate(1717 676) scale(0.1) translate(-818 -715)">
<path d="M747 570 L713 531 C690.6 558 632 637 632 707 A186 192 0 0 0 1004 707 C1004 637 945.4 558 923 531 L889 570 Q818 564 747 570 Z" fill="#ffb6ee"/>
<circle cx="818" cy="860" r="149" fill="#fff" clip-path="url(#headclip)"/>
<path d="M747 570 L713 531 C690.6 558 632 637 632 707 A186 192 0 0 0 1004 707 C1004 637 945.4 558 923 531 L889 570 Q818 564 747 570 Z" fill="none" stroke="#000" stroke-width="25" stroke-linejoin="round"/>
<path d="M818 679.6 A71.5 71.5 0 1 0 818 743.4 A71.5 71.5 0 1 0 818 679.6 Z" fill="#d6ff30" stroke="#000" stroke-width="25" stroke-linejoin="round"/>
<g stroke="#000" stroke-width="24" stroke-linecap="round"><path d="M754 682 L754 744"/><path d="M882 682 L882 744"/></g>
</g>
</svg>
<!-- layers bottom bar -->
<div class="a" style="left:1672px;top:1009px;width:328px;height:33px;background:#353535"></div>
<div class="a" style="left:1679px;top:1012px;width:25px;height:24px;background:#282828"></div>
<svg class="a" style="left:1672px;top:1009px" width="328" height="33" viewBox="1672 1009 328 33">
<g fill="none" stroke="#a8a8a8" stroke-width="1.3">
<rect x="1684" y="1015" width="10" height="10" rx="1"/><path d="M1696 1018v9h-9M1698 1020v9h-9"/>
<circle cx="1832.5" cy="1024.5" r="9"/>
<path d="M1928 1015h10l3 3v14h-13z"/><path d="M1930 1022h7M1930 1025h7M1930 1028h7M1940 1013v6M1937 1016h6"/>
<rect x="1952" y="1015" width="12" height="18" rx="1"/>
<path d="M1976 1018h14M1980 1018v-2h6v2M1978 1018l1 15h8l1-15M1981 1021v10M1985 1021v10"/>
<path d="M1876 1033l2-14c4-3 8-3 11 0l2 14zM1880 1024h10M1878 1029h12M1882 1019v14M1886 1019v14"/>
</g>
<rect x="1801" y="1017" width="15" height="13" rx="1.5" fill="#a8a8a8"/><circle cx="1808.5" cy="1023.5" r="3.8" fill="#353535"/>
<path d="M1826 1030.5L1838.5 1018a9 9 0 0 1-12.5 12.5z" fill="#a8a8a8"/>
<text x="1849.5" y="1032" font-family="Liberation Sans" font-weight="700" font-size="14.5" fill="#a8a8a8" letter-spacing="-1">FX</text>
<path d="M1849 1014h16M1849 1035h16" stroke="#a8a8a8" stroke-width="1"/>
<g fill="#a8a8a8"><rect x="1955" y="1018" width="2" height="2"/><rect x="1959" y="1018" width="2" height="2"/><rect x="1957" y="1020" width="2" height="2"/><rect x="1955" y="1022" width="2" height="2"/><rect x="1959" y="1022" width="2" height="2"/><rect x="1957" y="1024" width="2" height="2"/><rect x="1955" y="1026" width="2" height="2"/><rect x="1959" y="1026" width="2" height="2"/><rect x="1957" y="1028" width="2" height="2"/></g>
</svg>
<div class="tabbar" style="top:1042px"></div>
<svg class="a" style="left:1679px;top:1055px" width="8" height="11" viewBox="0 0 8 11"><path d="M2 0.5v10M6 0.5v10" stroke="#8a8a8a" stroke-width="1.2"/></svg>
<div class="tabact" style="left:1694px;top:1045px;width:72px;height:33px"></div>
<div class="tab" style="left:1700px;top:1054px;color:#e8e8e8">Transform</div>
<div class="tab" style="left:1772px;top:1054px;color:#bdbdbd">Navigator</div>
<div class="tab" style="left:1841px;top:1054px;color:#bdbdbd">History</div>
<div class="ham" style="top:1055px"><i></i><i></i><i></i></div>
<svg class="a" style="left:1692px;top:1120px" width="44" height="44" viewBox="0 0 44 44"><path d="M0 0h8v3h10v-3h8v3h10v-3h8v8h-3v10h3v8h-3v10h3v8h-8v-3h-10v3h-8v-3h-10v3h-8v-8h3v-10h-3v-8h3v-10h-3z" fill="#6e6e6e"/></svg>
<div class="lbl" style="left:1757px;top:1101px;font-size:12px;color:#888">X:</div>
<div class="lbl" style="left:1758px;top:1130px;font-size:12px;color:#888">Y:</div>
<div class="lbl" style="left:1756px;top:1166px;font-size:12px;color:#888">R:</div>
<div class="lbl" style="left:1868px;top:1101px;font-size:12px;color:#888">W:</div>
<div class="lbl" style="left:1870px;top:1130px;font-size:12px;color:#888">H:</div>
<div class="lbl" style="left:1871px;top:1166px;font-size:12px;color:#888">S:</div>
<div class="inp" style="left:1775px;top:1094px;width:78px;height:23px;background:#2e2e2e"></div>
<div class="inp" style="left:1775px;top:1123px;width:78px;height:24px;background:#2e2e2e"></div>
<div class="inp" style="left:1775px;top:1159px;width:78px;height:24px;background:#2e2e2e"></div>
<div class="inp" style="left:1888px;top:1094px;width:79px;height:23px;background:#2e2e2e"></div>
<div class="inp" style="left:1888px;top:1123px;width:79px;height:24px;background:#2e2e2e"></div>
<div class="inp" style="left:1888px;top:1159px;width:79px;height:24px;background:#2e2e2e"></div>
<div class="val" style="left:1782px;top:1100px;font-size:12.5px;color:#aaa">0 px</div>
<div class="val" style="left:1782px;top:1129px;font-size:12.5px;color:#aaa">0 px</div>
<div class="val" style="left:1782px;top:1165px;font-size:12.5px;color:#aaa">0 °</div>
<div class="val" style="left:1895px;top:1100px;font-size:12.5px;color:#aaa">0 px</div>
<div class="val" style="left:1895px;top:1129px;font-size:12.5px;color:#aaa">0 px</div>
<div class="val" style="left:1895px;top:1165px;font-size:12.5px;color:#aaa">0 °</div>
<svg class="a" style="left:1838px;top:1167px" width="11" height="9" viewBox="0 0 11 9"><path d="M2 2.5l3.5 3.5 3.5-3.5" stroke="#aaa" stroke-width="1.3" fill="none"/></svg>
<svg class="a" style="left:1952px;top:1167px" width="11" height="9" viewBox="0 0 11 9"><path d="M2 2.5l3.5 3.5 3.5-3.5" stroke="#aaa" stroke-width="1.3" fill="none"/></svg>
<svg class="a" style="left:1980px;top:1106px" width="12" height="27" viewBox="0 0 12 27"><path d="M3 11V4a3 3 0 0 1 6 0v7M3 16v7a3 3 0 0 0 6 0v-7M1 13.5h3M8 13.5h3M6 9v9" stroke="#999" stroke-width="1.2" fill="none"/></svg>
<div class="btn" style="left:1913px;top:1193px;width:55px;height:31px;background:#3d3d3d"></div>
<div class="a" style="left:1950px;top:1193px;width:1px;height:31px;background:#333"></div>
<svg class="a" style="left:1918px;top:1197px" width="26" height="24" viewBox="0 0 26 24"><path d="M6 13V4h13v15" stroke="#888" stroke-width="1.1" fill="none" stroke-dasharray="3 1.5"/><rect x="4" y="14" width="8" height="7" rx="1.8" fill="#777"/></svg>
<svg class="a" style="left:1953px;top:1203px" width="11" height="9" viewBox="0 0 11 9"><path d="M2 2.5l3.5 3.5 3.5-3.5" stroke="#ddd" stroke-width="1.3" fill="none"/></svg>
<!-- taskbar -->
<svg class="a" style="left:0;top:1267px" width="2000" height="67" viewBox="0 1267 2000 67">
<rect x="0" y="1267" width="2000" height="67" fill="#252b3d"/>
<path d="M1685 1267L1742 1334H2000V1267z" fill="#364670"/>
<path d="M1768 1267L1825 1334H2000V1267z" fill="#4a5f8a"/>
<path d="M561 1334V1274a7 7 0 0 1 7-7H1430a7 7 0 0 1 7 7V1334z" fill="#1b2031"/>
<rect x="649" y="1267" width="75" height="67" fill="#2f3547"/><rect x="649" y="1267" width="75" height="3" fill="#4f5569"/>
<rect x="1037" y="1267" width="76" height="67" fill="#222a3b"/>
<rect x="1193" y="1267" width="75" height="67" fill="#0f5a72"/><rect x="1193" y="1267" width="75" height="3.5" fill="#1a9cc5"/>
<!-- kde -->
<rect x="593" y="1281" width="39" height="39" fill="#1d99f3"/>
<path d="M606 1292.5l2-1 1 2 2 .2.8-2 2 .5-.2 2.2 1.6 1.3 1.8-1.2 1.2 1.6-1.4 1.6.6 2 2.2.3-.1 2.1-2.2.3-.7 2 1.5 1.5-1.3 1.6-1.8-1.2-1.8 1.1.3 2.2-2 .6-1-2-2 .1-.9 2-2-.6.2-2.2-1.6-1.3-1.8 1.2-1.2-1.7 1.5-1.5-.6-2-2.2-.4.1-2.1 2.2-.2.8-2-1.5-1.6 1.4-1.5 1.8 1.3z" fill="#fff"/>
<circle cx="610" cy="1302" r="3.5" fill="#1d99f3"/>
<path d="M614 1287v23M614 1299l10-12M617 1297l8 13" stroke="#fff" stroke-width="4.2" fill="none"/>
<!-- firefox -->
<defs><radialGradient id="ffg" cx="0.7" cy="0.15" r="0.95"><stop offset="0" stop-color="#ffe226"/><stop offset="0.45" stop-color="#ff9a1f"/><stop offset="0.8" stop-color="#ff5a2a"/><stop offset="1" stop-color="#e83e5a"/></radialGradient>
<radialGradient id="ffp" cx="0.4" cy="0.3" r="0.8"><stop offset="0" stop-color="#a06bff"/><stop offset="1" stop-color="#6a3fd0"/></radialGradient></defs>
<path d="M705 1300a19 19 0 1 1-37-6c1-4 3-7 5-9 0 3 1 5 2 6 2-4 6-7 11-8-1 2-1 4 0 5 4-2 8-7 9-8 2 3 3 5 4 7 4 3 6 8 6 13z" fill="url(#ffg)"/>
<circle cx="689.5" cy="1298.5" r="8.8" fill="url(#ffp)"/>
<path d="M668.5 1296c2-5 6-9 10-10 3 0 5 1 7 3-4 0-6 2-7 4 3 1 5 3 5 5-2-1-5-1-8 0-3 1-5 0-7-2z" fill="#ff7a1f"/>
<path d="M685 1316c8 1 15-3 18-10 1 5-3 12-10 14-4 1-7 0-8-4z" fill="#ff5a3a" opacity="0.7"/>
<!-- files -->
<rect x="753" y="1280" width="22" height="4" rx="1.5" fill="#3d8fdc"/>
<rect x="749" y="1284" width="30" height="4" rx="1.5" fill="#5ec45e"/>
<rect x="746" y="1288" width="36" height="5" rx="1.5" fill="#f7c94b"/>
<rect x="744" y="1292.5" width="39" height="28" rx="2" fill="#8e8e8e"/>
<rect x="757" y="1304" width="13" height="4" rx="2" fill="#eee"/>
<!-- dolphin-ish -->
<rect x="822" y="1282" width="39" height="35" rx="1.5" fill="#6262d9"/>
<rect x="841" y="1285" width="20" height="32" fill="#7f7fe6"/>
<rect x="822" y="1282" width="39" height="6" fill="#c1c1de"/>
<path d="M836 1294v16l4-4 3 5 2-1-3-5h5z" fill="#2a2a5a"/>
<!-- terminal -->
<rect x="900" y="1282" width="39" height="35" rx="2.5" fill="#4a4a4a"/>
<path d="M905 1289l6 5-6 5" stroke="#eee" stroke-width="2.6" fill="none"/><rect x="916" y="1298" width="10" height="4" fill="#eee"/>
<!-- sysmon -->
<rect x="977" y="1281" width="39" height="39" rx="11" fill="#4a4a4a"/>
<path d="M977 1294h39M977 1298h39M977 1302h39M977 1306h39M977 1310h39" stroke="#3a3a3a" stroke-width="1.5"/>
<path d="M977 1301h6l3-9 5 17 4-14 3 8 3-3h15" stroke="#2df04a" stroke-width="3.2" fill="none" stroke-linejoin="round"/>
<!-- vscode -->
<path d="M1085 1281l10 5v28l-10 5-18-16-7 6-4-2v-18l4-2 7 6z" fill="#1f9cf0"/>
<path d="M1085 1291v19l-13-9.5z" fill="#222a3b"/>
<path d="M1060 1291l25 21" stroke="#1177bb" stroke-width="5"/>
<!-- photo -->
<defs><linearGradient id="phg" x1="0" y1="0" x2="0" y2="1"><stop offset="0" stop-color="#f6a6fb"/><stop offset="1" stop-color="#e35cf0"/></linearGradient></defs>
<rect x="1130.5" y="1278" width="44.5" height="44.5" rx="4.5" fill="#4d2f8f"/>
<path d="M1150 1281.8H1172.5V1319.5H1133.8V1309.5z" fill="url(#phg)"/>
<g stroke="#4d2f8f" stroke-width="1.3" fill="none">
<path d="M1170.5 1282L1155.5 1306.5"/><path d="M1172.5 1306.5H1149"/><path d="M1158 1319.5L1146 1299"/>
<path d="M1136 1319.5L1149.5 1296"/><path d="M1142.5 1294.5H1159"/><path d="M1148.5 1282.5L1159.5 1301"/>
</g>
<!-- designer -->
<g transform="translate(1208 1278) scale(1.833 1.76)"><rect x="0" y="0" width="24" height="25" rx="2.5" fill="#1b4f8f"/><path d="M10.5 2H22.3V23H1.8V17z" fill="url(#lg1)"/><path d="M14.8 1.5L7 15.5L10.8 24M7 15.5H23M10.5 8.8L14 15.5" stroke="#1b4f8f" stroke-width="0.8" fill="none"/></g>
<!-- publisher -->
<defs><linearGradient id="pbg" x1="0" y1="0" x2="0" y2="1"><stop offset="0" stop-color="#ffaa66"/><stop offset="1" stop-color="#ff8a40"/></linearGradient></defs>
<rect x="1286" y="1278" width="44.5" height="44.5" rx="4.5" fill="#8a1c22"/>
<path d="M1305 1281.8H1326.5V1319.5H1289.5V1309z" fill="url(#pbg)"/>
<g stroke="#8a1c22" stroke-width="1.5" fill="none">
<path d="M1311.2 1281.8L1327 1309"/><path d="M1305 1283L1324 1319.5"/><path d="M1300 1291.5L1315 1319.5"/><path d="M1295.6 1299.5L1306.2 1319.5"/>
</g>
<!-- settings -->
<circle cx="1380" cy="1300" r="14" fill="#13877a"/>
<g fill="#13877a"><circle cx="1380" cy="1284" r="4"/><circle cx="1394" cy="1292" r="4"/><circle cx="1394" cy="1308" r="4"/><circle cx="1366" cy="1292" r="4"/><circle cx="1366" cy="1308" r="4"/><circle cx="1380" cy="1316" r="4"/></g>
<path d="M1373 1292a8 8 0 0 0 4 13v11h6v-11a8 8 0 0 0 4-13v6l-3 3h-8l-3-3z" fill="#fff"/>
<rect x="1379" y="1314" width="2" height="5" fill="#bbb"/>
</svg>
<!-- context bar -->
<div class="t" style="left:11px;top:145px;font-size:11.8px;color:#e0e0e0">No Selection</div>
<div class="sep" style="left:91px;top:138px;height:25px;background:#282828"></div>
<div class="a" style="left:102px;top:142px;width:14px;height:14px;background:#262626;border-radius:2px"></div>
<svg class="a" style="left:102px;top:142px" width="14" height="14" viewBox="0 0 14 14"><path d="M3.5 7.5l2.5 2.5 5-5.5" stroke="#e0e0e0" stroke-width="1.4" fill="none"/></svg>
<div class="t" style="left:122px;top:143px;font-size:12.5px;color:#b4b4b4">Auto-select:</div>
<div class="a" style="left:203px;top:140px;width:94px;height:19px;background:#3d3d3d;border-radius:2px"></div>
<div class="t" style="left:208px;top:144px;font-size:12.5px;color:#e6e6e6">Default</div>
<svg class="a" style="left:282px;top:145px" width="11" height="9" viewBox="0 0 11 9"><path d="M2 2.5l3.5 3.5 3.5-3.5" stroke="#e0e0e0" stroke-width="1.3" fill="none"/></svg>
<div class="sep" style="left:306px;top:138px;height:25px;background:#282828"></div>
<div class="btn" style="left:315px;top:138px;width:140px;height:24px;background:#3d3d3d"></div>
<div class="t" style="left:338px;top:145px;font-size:12px;color:#e0e0e0">Document Setup...</div>
<div class="btn" style="left:461px;top:138px;width:96px;height:24px;background:#3d3d3d"></div>
<div class="t" style="left:484px;top:145px;font-size:12px;color:#e0e0e0">Settings...</div>
<!-- doc tab -->
<div class="t" style="left:68px;top:177px;font-size:14px;color:#e0e0e0">genki (99.8%)</div>
<svg class="a" style="left:1645px;top:179px" width="10" height="10" viewBox="0 0 10 10"><path d="M1 1L9 9M9 1L1 9" stroke="#e0e0e0" stroke-width="1.5"/></svg>
<!-- scrollbars -->
<svg class="a" style="left:1649px;top:206px" width="12" height="11" viewBox="0 0 12 11"><path d="M1.5 10h9L6 1z" fill="#8a8a8a"/></svg>
<svg class="a" style="left:1649px;top:1198px" width="12" height="11" viewBox="0 0 12 11"><path d="M1.5 1h9L6 10z" fill="#8a8a8a"/></svg>
<div class="a" style="left:1651px;top:545px;width:8px;height:316px;background:#888;border-radius:4px"></div>
<svg class="a" style="left:62px;top:1219px" width="11" height="12" viewBox="0 0 11 12"><path d="M10 1.5v9L1 6z" fill="#8a8a8a"/></svg>
<svg class="a" style="left:1627px;top:1219px" width="11" height="12" viewBox="0 0 11 12"><path d="M1 1.5v9L10 6z" fill="#8a8a8a"/></svg>
<div class="a" style="left:614px;top:1221px;width:517px;height:9px;background:#888;border-radius:4.5px"></div>
<!-- status -->
<div class="t" style="left:25px;top:1247px;font-size:12.4px;color:#c8c8c8"><b style="color:#f0f0f0">Drag</b> to marquee select. <b style="color:#f0f0f0">Click</b> an object to select it.</div>
<svg class="a" style="left:0;top:0" width="2000" height="1334" viewBox="0 0 2000 1334">
<defs><clipPath id="headclip"><path d="M747 570 L713 531 C690.6 558 632 637 632 707 A186 192 0 0 0 1004 707 C1004 637 945.4 558 923 531 L889 570 Q818 564 747 570 Z"/></clipPath></defs>
<rect x="428" y="431" width="778" height="567" fill="#2a1b1b"/>
<rect x="429" y="432" width="777" height="566" fill="#00ffff"/>
<path d="M747 570 L713 531 C690.6 558 632 637 632 707 A186 192 0 0 0 1004 707 C1004 637 945.4 558 923 531 L889 570 Q818 564 747 570 Z" fill="#ffb6ee"/>
<circle cx="818" cy="860" r="149" fill="#fff" clip-path="url(#headclip)"/>
<path d="M747 570 L713 531 C690.6 558 632 637 632 707 A186 192 0 0 0 1004 707 C1004 637 945.4 558 923 531 L889 570 Q818 564 747 570 Z" fill="none" stroke="#000" stroke-width="25" stroke-linejoin="round"/>
<path d="M818 679.6 A71.5 71.5 0 1 0 818 743.4 A71.5 71.5 0 1 0 818 679.6 Z" fill="#d6ff30" stroke="#000" stroke-width="25" stroke-linejoin="round"/>
<g stroke="#000" stroke-width="24" stroke-linecap="round"><path d="M754 682 L754 744"/><path d="M882 682 L882 744"/></g>
<g stroke="#000" stroke-width="16" stroke-linejoin="round" fill="#35bffd">
<path d="M754 886 L754 942 L818 915 Z"/><path d="M882 886 L882 942 L818 915 Z"/></g>
<g stroke="#606060" stroke-width="17" stroke-linecap="round" fill="none">
<path d="M577 760 C600 746 640 760 674 785"/><path d="M534 840 C560 815 620 810 675 807.5"/>
<path d="M1059 760 C1036 746 996 760 962 785"/><path d="M1102 840 C1076 815 1016 810 961 807.5"/>
</g>
</svg>
</body></html>
